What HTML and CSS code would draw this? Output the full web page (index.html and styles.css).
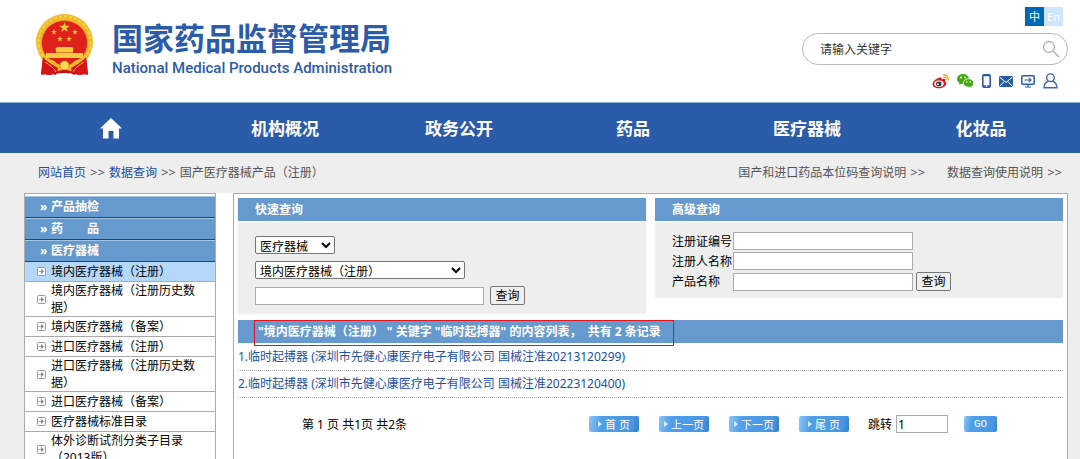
FILE: index.html
```html
<!DOCTYPE html>
<html lang="zh-CN">
<head>
<meta charset="utf-8">
<title>国家药品监督管理局 - 数据查询</title>
<link rel="stylesheet" href="styles.css">
</head>
<body>
<svg class="defs" width="0" height="0" aria-hidden="true">
  <symbol id="i-item" viewBox="0 0 9 9"><rect x=".5" y=".5" width="8" height="8" rx="1" fill="#fff" stroke="#999"/><path d="M2 4.5h4.5M4.5 2.5v4l2-2z" fill="#888" stroke="#888" stroke-width=".8"/></symbol>
  <symbol id="i-star" viewBox="-10 -10 20 20"><path d="M0-10 2.3-3.2 9.5-3.1 3.8 1.2 5.9 8.1 0 4-5.9 8.1-3.8 1.2-9.5-3.1-2.3-3.2z" fill="#f5c83c"/></symbol>
</svg>
<header class="header">
  <a class="brand" href="#">
    <svg class="emblem" viewBox="0 0 57 62" aria-hidden="true">
      <path d="M7 42 5 60l10 1 6-2 7.500-1 7.500 1 6 2 10-1-2-18z" fill="#d8141b"/>
      <ellipse cx="28.500" cy="28" rx="28.500" ry="28" fill="#f0b82c"/>
      <ellipse cx="28.500" cy="28" rx="26" ry="25.500" fill="none" stroke="#f8d24a" stroke-width="2" stroke-dasharray="3 2"/>
      <ellipse cx="28.500" cy="29" rx="23" ry="22.500" fill="#e0201b" stroke="#e8a51f" stroke-width=".6"/>
      <use href="#i-star" x="23" y="8" width="11" height="11"/>
      <use href="#i-star" x="15" y="15" width="6" height="6"/>
      <use href="#i-star" x="36" y="15" width="6" height="6"/>
      <use href="#i-star" x="21" y="22" width="6" height="6"/>
      <use href="#i-star" x="30" y="22" width="6" height="6"/>
      <path d="M21 33h15l2 2.500H19zM20 35h17v3.500H20zM10 39h37v5H10z" fill="#f8cc3e"/>
      <path d="M7 44c8 0 13 3 16 8l5.500-4 5.500 4c3-5 8-8 16-8l-5 7-8 4-5 5-3.500-3-3.500 3-5-5-8-4z" fill="#f2b92b"/>
      <path d="M14 45c5 1 8 3 10 5l4.500-3 4.500 3c2-2 5-4 10-5z" fill="#dc1c1b"/>
      <circle cx="28.500" cy="51.500" r="4.500" fill="#fbdc55" stroke="#d98d18"/>
      <path d="M7 43c4 5 10 8 15 11l-2 7-4-2-3 2-4-1-4 1zM50 43c-4 5-10 8-15 11l2 7 4-2 3 2 4-1 4 1z" fill="#d8141b"/>
      <path d="M17 61c4-4 7-5 11.500-5s7.500 1 11.500 5c-5-2-8-2-11.500-2s-6.500 0-11.500 2z" fill="#c91017"/>
      <path d="M9 48c5 3 9 6 11 10M48 48c-5 3-9 6-11 10" fill="none" stroke="#f2b92b"/>
    </svg>
    <span class="brand-text">
      <strong class="brand-cn">国家药品监督管理局</strong>
      <span class="brand-en">National Medical Products Administration</span>
    </span>
  </a>
  <div class="tools">
    <div class="lang"><a class="lang-on" href="#">中</a><a class="lang-off" href="#">En</a></div>
    <form class="search">
      <input class="search-input" type="text" aria-label="请输入关键字" placeholder="请输入关键字">
      <button class="search-btn" type="button" aria-label="搜索"><svg width="18" height="18" viewBox="0 0 18 18"><circle cx="7" cy="7" r="5.500" fill="none" stroke="#b0b0b0" stroke-width="1.300"/><path d="m11 11 6 6" stroke="#b0b0b0" stroke-width="1.500"/></svg></button>
    </form>
    <div class="social">
      <a href="#" aria-label="微博"><svg width="17" height="15" viewBox="0 0 17 15"><path d="M6.500 4C9 2.500 10 3.500 9.500 5.500c3-1 4.500 0 3.500 2 2 1 1.500 3 0 4.500-3 3-9 3-11.500.500C-1 10 2 5.500 6.500 4z" fill="#e1141c"/><ellipse cx="7" cy="9.700" rx="4.700" ry="3.200" fill="#fff"/><ellipse cx="6.800" cy="9.900" rx="2.700" ry="2.300" fill="#333"/><circle cx="6" cy="10.200" r=".9" fill="#fff"/><path d="M11.500 3.500c2-.4 2.800.8 2.300 2.500M11 1.200c3.500-.8 6 1.800 5 5.300" fill="none" stroke="#f5a623" stroke-width="1.400"/></svg></a>
      <a href="#" aria-label="微信"><svg width="17" height="14" viewBox="0 0 17 14"><path d="M6 0c3.300 0 6 2.100 6 5s-2.700 5-6 5l-1.800-.3L2 11l.5-2C1 8.200 0 6.700 0 5c0-2.900 2.700-5 6-5z" fill="#45aa16"/><path d="M11.500 4.800c2.900 0 5.200 1.800 5.200 4.200 0 1.400-.8 2.500-1.900 3.300l.4 1.700-2-1-1.700.2c-2.900 0-5.200-1.800-5.200-4.200s2.300-4.200 5.200-4.200z" fill="#45aa16" stroke="#fff" stroke-width=".7"/><g fill="#fff"><circle cx="4" cy="3.500" r=".9"/><circle cx="8" cy="3.500" r=".9"/><circle cx="9.800" cy="8" r=".8"/><circle cx="13.300" cy="8" r=".8"/></g></svg></a>
      <a href="#" aria-label="手机"><svg width="9" height="14" viewBox="0 0 9 14"><rect x=".8" y=".8" width="7.400" height="12.400" rx="1.200" fill="#fff" stroke="#2b5caa" stroke-width="1.600"/><path d="M1 1.500h7M1 12h7" stroke="#2b5caa" stroke-width="1.600"/><circle cx="4.500" cy="12" r=".7" fill="#fff"/></svg></a>
      <a href="#" aria-label="邮箱"><svg width="14" height="11" viewBox="0 0 14 11"><rect width="14" height="11" fill="#2b5caa"/><path d="m.5 1 6.500 5.500L13.500 1M.5 10.500 5 5.500m8.500 5L9 5.500" fill="none" stroke="#fff" stroke-width="1"/></svg></a>
      <a href="#" aria-label="电脑"><svg width="14" height="13" viewBox="0 0 14 13"><rect x=".8" y=".8" width="12.400" height="8.400" rx="1" fill="#fff" stroke="#2b5caa" stroke-width="1.500"/><path d="M3.500 5H10M7.800 2.800 10 5 7.800 7.200M7 9v3M4 12h6" fill="none" stroke="#2b5caa" stroke-width="1.200"/></svg></a>
      <a href="#" aria-label="用户"><svg width="15" height="16" viewBox="0 0 15 16"><circle cx="7.500" cy="4.700" r="3.800" fill="none" stroke="#4463b5" stroke-width="1.400"/><path d="M5 8.300C2.500 9.300 1 11.500 1 14.800h13c0-3.300-1.500-5.500-4-6.500" fill="none" stroke="#4463b5" stroke-width="1.400"/></svg></a>
    </div>
  </div>
</header>
<nav class="nav">
  <a href="#" aria-label="首页"><svg width="22" height="21" viewBox="0 0 22 21"><path d="M11 0 22 10.500h-3V20.500h-5.500V13h-5v7.500H3V10.500H0z" fill="#fff"/></svg></a>
  <a href="#">机构概况</a>
  <a href="#">政务公开</a>
  <a href="#">药品</a>
  <a href="#">医疗器械</a>
  <a href="#">化妆品</a>
</nav>
<div class="crumbs">
  <div><a class="link" href="#">网站首页</a><span class="sep">&gt;&gt;</span><a class="link" href="#">数据查询</a><span class="sep">&gt;&gt;</span>国产医疗器械产品（注册）</div>
  <div class="help"><a href="#">国产和进口药品本位码查询说明<span class="sep">&gt;&gt;</span></a><a href="#">数据查询使用说明<span class="sep">&gt;&gt;</span></a></div>
</div>
<div class="page">
  <aside class="side">
    <div class="groups">
      <a class="group" href="#"><span class="mark">»</span>产品抽检</a>
      <a class="group" href="#"><span class="mark">»</span>药　　品</a>
      <a class="group" href="#"><span class="mark">»</span>医疗器械</a>
    </div>
    <a class="item item-on" href="#"><svg><use href="#i-item"/></svg><span>境内医疗器械（注册）</span></a>
    <a class="item" href="#"><svg><use href="#i-item"/></svg><span>境内医疗器械（注册历史数据）</span></a>
    <a class="item" href="#"><svg><use href="#i-item"/></svg><span>境内医疗器械（备案）</span></a>
    <a class="item" href="#"><svg><use href="#i-item"/></svg><span>进口医疗器械（注册）</span></a>
    <a class="item" href="#"><svg><use href="#i-item"/></svg><span>进口医疗器械（注册历史数据）</span></a>
    <a class="item" href="#"><svg><use href="#i-item"/></svg><span>进口医疗器械（备案）</span></a>
    <a class="item" href="#"><svg><use href="#i-item"/></svg><span>医疗器械标准目录</span></a>
    <a class="item" href="#"><svg><use href="#i-item"/></svg><span>体外诊断试剂分类子目录（2013版）</span></a>
  </aside>
  <main class="main">
    <div class="queries">
      <section class="query">
        <h2 class="bar">快速查询</h2>
        <form class="quick">
          <select class="sel-type" aria-label="类别"><option>医疗器械</option></select>
          <select class="sel-db" aria-label="数据库"><option>境内医疗器械（注册）</option></select>
          <div class="quick-line"><input class="field quick-field" type="text" aria-label="关键字"><button class="btn" type="button">查询</button></div>
        </form>
      </section>
      <section class="query">
        <h2 class="bar">高级查询</h2>
        <form class="adv">
          <label for="no">注册证编号</label><input class="field" id="no" type="text">
          <label for="owner">注册人名称</label><input class="field" id="owner" type="text">
          <label for="product">产品名称</label><input class="field" id="product" type="text"><button class="btn" type="button">查询</button>
        </form>
      </section>
    </div>
    <h2 class="bar result-bar"><span class="result-title">"境内医疗器械（注册）&nbsp;" 关键字 "临时起搏器" 的内容列表，&nbsp; 共有 2 条记录</span></h2>
    <div class="results">
      <a class="result" href="#">1.临时起搏器 (深圳市先健心康医疗电子有限公司 国械注准20213120299)</a>
      <a class="result" href="#">2.临时起搏器 (深圳市先健心康医疗电子有限公司 国械注准20223120400)</a>
    </div>
    <div class="pager">
      <span class="pager-info">第 1 页 共1页 共2条</span>
      <div class="pager-btns">
        <button class="pg" type="button"><i class="tri"></i>首 页</button>
        <button class="pg" type="button"><i class="tri"></i>上一页</button>
        <button class="pg" type="button"><i class="tri"></i>下一页</button>
        <button class="pg" type="button"><i class="tri"></i>尾 页</button>
      </div>
      <label class="jump" for="jump">跳转<input class="field jump-field" id="jump" type="text" value="1"></label>
      <button class="pg go" type="button">GO</button>
    </div>
  </main>
</div>
</body>
</html>
```
FILE: styles.css
```css
* { box-sizing: border-box; }
html { overflow: hidden; }
body {
  margin: 0;
  height: 100vh;
  overflow: hidden;
  display: flex;
  flex-direction: column;
  background: #eee;
  color: #000;
  font: 12px/17px "Noto Sans", "Noto Sans CJK SC", sans-serif;
  text-spacing-trim: space-all;
}
a { color: inherit; text-decoration: none; }
svg { display: block; flex: none; }
.defs { position: absolute; }
input, select, button { font: inherit; color: inherit; margin: 0; }

.header {
  flex: none;
  display: flex;
  justify-content: space-between;
  height: 102px;
  padding: 7px 12px 0 36px;
  background: #fff;
}
.brand { display: flex; gap: 19px; padding-top: 7px; color: #2b5caa; }
.emblem { width: 57px; height: 62px; }
.brand-text { display: flex; flex-direction: column; padding-top: 6px; }
.brand-cn { font: bold 31px/34px "Noto Sans CJK SC", sans-serif; }
.brand-en { font: 500 15px/28px Roboto, sans-serif; }

.tools { display: flex; flex-direction: column; align-items: flex-end; }
.lang { display: flex; margin-right: 5px; color: #fff; font-size: 11px; line-height: 19px; text-align: center; }
.lang a { width: 19px; }
.lang-on { background: #0068b7; }
.lang-off { background: #cce6ff; }
.search {
  display: flex;
  align-items: center;
  width: 266px;
  height: 32px;
  margin-top: 7px;
  padding: 0 7px 0 17px;
  border: 1px solid #bbb;
  border-radius: 16px;
}
.search-input { flex: 1; min-width: 0; padding: 0; border: 0; outline: 0; background: none; }
.search-input::placeholder { color: #333; }
.search-btn { padding: 0; border: 0; background: none; }
.social { display: flex; align-items: center; gap: 8px; height: 16px; margin: 8px 10px 0 0; }

.nav {
  flex: none;
  display: grid;
  grid-template-columns: repeat(6, 1fr);
  height: 51px;
  padding: 0 12px 0 24px;
  border-top: 1px solid #8fa9cf;
  background: #2b5caa;
  color: #fff;
  font: bold 17px/50px "Noto Sans CJK SC", sans-serif;
}
.nav a { display: flex; align-items: center; justify-content: center; }

.crumbs {
  flex: none;
  display: flex;
  justify-content: space-between;
  padding: 0 10px 0 38px;
  line-height: 40px;
  color: #555;
}
.link { color: #1a50a8; }
.sep { padding: 0 4px; font-size: 13px; line-height: 17px; }
.help { display: flex; gap: 14px; }
.help a { padding-right: 4px; }

.page { flex: 1; min-height: 0; display: flex; gap: 17px; margin: 0 12px 0 24px; background: #fff; }
.side { width: 192px; flex: none; border: 1px solid #aaa; border-bottom: 0; }
.groups { padding-top: 2px; }
.group {
  display: flex;
  height: 22px;
  padding-left: 15px;
  border-top: 1px solid #a5c5e6;
  border-bottom: 1px solid #2c4258;
  background: #6699cd;
  color: #fff;
  font-weight: bold;
  line-height: 20px;
}
.mark { width: 11px; }
.item {
  display: flex;
  align-items: center;
  gap: 5px;
  min-height: 20px;
  padding: 0 12px;
  border-bottom: 1px solid #aaa;
}
.item svg { width: 9px; height: 9px; }
.item-on { background: #b5d7f9; }

.main { flex: 1; min-width: 0; padding: 4px; border: 1px solid #aaa; border-bottom: 0; }
.queries { display: grid; grid-template-columns: 1fr 1fr; gap: 9px; align-items: start; }
.bar { height: 23px; margin: 0; padding: 0 17px; background: #6699cd; color: #fff; font-size: 12px; line-height: 23px; }
.quick, .adv { margin-top: 1px; background: #eee; }
.quick { display: flex; flex-direction: column; align-items: flex-start; gap: 7px; padding: 14px 17px 9px; }
select { height: 18px; padding: 0; border: 1px solid #767676; border-radius: 2px; background-color: #fff; }
.sel-type { width: 80px; }
.sel-db { width: 210px; }
.quick-line { display: flex; align-items: center; gap: 6px; }
.field { height: 18px; padding: 0 1px; border: 1px solid #aaa; border-radius: 0; background: #fff; }
.quick-field { width: 229px; }
.btn { width: 35px; height: 19px; padding: 0; border: 1px solid #767676; border-radius: 2px; background: #efefef; line-height: 16px; }
.adv {
  display: grid;
  grid-template-columns: 61px 180px 35px;
  column-gap: 0;
  row-gap: 2px;
  align-items: center;
  padding: 10px 17px 7px;
}
.adv label { grid-column: 1; white-space: nowrap; }
.adv .btn { margin-left: 3px; }
.result-bar { display: flex; align-items: flex-start; margin-top: 6px; padding: 0 16px; }
.result-title { flex: none; height: 26px; padding: 0 12px 0 3px; border: 1px solid #e8141c; line-height: 22px; }
.results { padding-top: 1px; }
.result { display: block; height: 27px; border-bottom: 1px dotted #aaa; color: #1a50a8; line-height: 26px; }
.pager { display: flex; align-items: center; padding: 17px 0 0 64px; }
.pager-info { width: 287px; flex: none; }
.pager-btns { display: flex; gap: 20px; }
.pg {
  display: flex;
  align-items: center;
  justify-content: center;
  gap: 3px;
  width: 50px;
  height: 16px;
  padding: 0;
  border: 0;
  border-radius: 2px;
  background: linear-gradient(100deg, #8cc4f6 0, #4f9fe8 25%, #4797e4 85%, #2f80d2 100%);
  color: #fff;
  font-size: 11px;
  line-height: 15px;
  white-space: nowrap;
}
.tri { border: 3px solid transparent; border-left: 4px solid #d5ecff; border-right: 0; }
.jump { display: flex; align-items: center; gap: 4px; margin-left: 19px; }
.jump-field { width: 52px; }
.go { width: 33px; margin-left: 16px; font-family: "Liberation Mono", monospace; }
```
